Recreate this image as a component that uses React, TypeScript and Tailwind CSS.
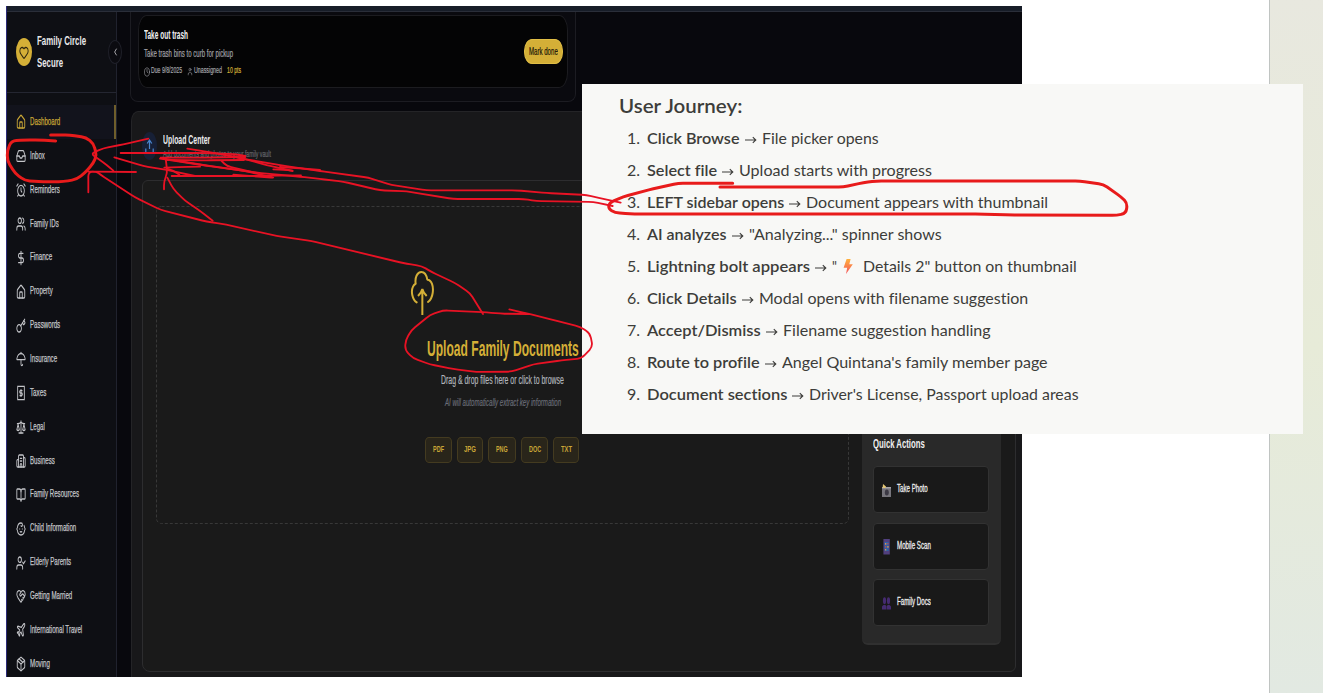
import { useLayoutEffect, useRef, useState } from "react";
import type { ReactNode } from "react";
import {
  House, Inbox, AlarmClock, Users, DollarSign, Key, Umbrella, Scale, Building2,
  BookOpen, Baby, UserCheck, HeartHandshake, Plane, Package, Heart, ChevronLeft, Clock, User,
} from "lucide-react";

/* Text stretched or squeezed horizontally to a fixed width. */
function Fit({ w, className = "", children }: { w: number; className?: string; children: ReactNode }) {
  const ref = useRef<HTMLSpanElement>(null);
  const [s, setS] = useState(1);
  useLayoutEffect(() => {
    if (ref.current) setS(w / ref.current.offsetWidth);
  }, [w]);
  return (
    <span className={`block shrink-0 whitespace-nowrap ${className}`} style={{ width: w }}>
      <span ref={ref} className="inline-block origin-left" style={{ transform: `scaleX(${s})` }}>
        {children}
      </span>
    </span>
  );
}

function TaxIcon(props: any) {
  return (
    <svg viewBox="0 0 24 24" fill="none" stroke="currentColor" strokeWidth="2.4" {...props}>
      <path d="M4 2h16v20H4z" />
      <path d="M15.5 8.5h-5a1.8 1.8 0 0 0 0 3.6h3a1.8 1.8 0 0 1 0 3.6h-5M12 6v12" />
    </svg>
  );
}

const nav: [string, any, number][] = [
  ["Dashboard", House, 30],
  ["Inbox", Inbox, 15],
  ["Reminders", AlarmClock, 30],
  ["Family IDs", Users, 29],
  ["Finance", DollarSign, 22],
  ["Property", House, 23],
  ["Passwords", Key, 30],
  ["Insurance", Umbrella, 27],
  ["Taxes", TaxIcon, 16],
  ["Legal", Scale, 15],
  ["Business", Building2, 25],
  ["Family Resources", BookOpen, 49],
  ["Child Information", Baby, 46],
  ["Elderly Parents", UserCheck, 41],
  ["Getting Married", HeartHandshake, 42],
  ["International Travel", Plane, 52],
  ["Moving", Package, 20],
];

function Sidebar() {
  return (
    <aside className="relative w-[110px] shrink-0 border-r border-[#20222e] bg-[#0e0f14]">
      <div className="flex h-[81px] items-center gap-[5px] border-b border-[#242631] pl-[9px]">
        <div className="flex h-7 w-4 shrink-0 items-center justify-center rounded-[50%] bg-[#d4af37] text-[#2b2410]">
          <Heart preserveAspectRatio="none" strokeWidth={2.2} className="h-[15px] w-[10px]" />
        </div>
        <div className="text-[13.5px] leading-[22px] font-bold text-[#e8e8ea]">
          <Fit w={49}>Family Circle</Fit>
          <Fit w={26}>Secure</Fit>
        </div>
      </div>
      <div className="absolute top-[28px] left-[101px] flex h-6 w-[14px] items-center justify-center rounded-[50%] border border-[#1f2029] bg-[#0b0b10] text-[#c9c9cc]">
        <ChevronLeft preserveAspectRatio="none" className="h-3 w-[7px]" />
      </div>
      <nav className="mt-3">
        {nav.map(([label, Icon, w], i) => (
          <div
            key={label}
            className={
              i === 0
                ? "flex h-[33.87px] items-center gap-[4px] border-r-2 border-[#6f5e2b] bg-[#12131c] pl-[9px] text-[#c9a636]"
                : "flex h-[33.87px] items-center gap-[4px] pl-[9px] text-[#c4c5c9]"
            }
          >
            <Icon preserveAspectRatio="none" strokeWidth={2.1} className="mt-px h-4 w-[10px] shrink-0" />
            <Fit w={w} className="pb-[2px] text-[10.5px] leading-4 [-webkit-text-stroke:0.25px_currentColor]">{label}</Fit>
          </div>
        ))}
      </nav>
    </aside>
  );
}

function TaskCard() {
  return (
    <section className="h-[90px] w-[446px] rounded-b-[8px] border border-t-0 border-[#1c1c22] bg-[#0a0a0f] pt-[3px] pl-[7px]">
      <div className="flex h-[73px] w-[430px] items-center justify-between rounded-[9px/15px] border border-[#1c1c20] bg-[#040405] pr-[4px] pl-[5px]">
        <div className="pt-px">
          <Fit w={44} className="text-[12px] leading-[18px] font-bold text-[#f2f2f2]">Take out trash</Fit>
          <Fit w={89} className="text-[10.5px] leading-[18px] text-[#a3a3a8] [-webkit-text-stroke:0.2px_currentColor]">Take trash bins to curb for pickup</Fit>
          <div className="flex h-4 items-center text-[8.5px] leading-4 text-[#a3a3a8] [-webkit-text-stroke:0.2px_currentColor]">
            <Clock preserveAspectRatio="none" strokeWidth={1.8} className="mt-1 h-[10px] w-[6px]" />
            <Fit w={31} className="ml-px">Due 9/8/2025</Fit>
            <User preserveAspectRatio="none" strokeWidth={1.8} className="mt-[3px] ml-[5px] h-[9px] w-[6px]" />
            <Fit w={28} className="ml-px">Unassigned</Fit>
            <Fit w={14} className="ml-[5px] text-[#d4af37]">10 pts</Fit>
          </div>
        </div>
        <button className="flex h-[25px] w-[39px] items-center justify-center rounded-[8px/12px] border border-[#e0bd45] bg-[#d4af37]">
          <Fit w={29} className="pb-px text-[10.5px] leading-4 text-[#151208] [-webkit-text-stroke:0.2px_currentColor]">Mark done</Fit>
        </button>
      </div>
    </section>
  );
}

function UploadCloud() {
  return (
    <svg viewBox="88 58 74 138" className="-ml-4 h-[46px] w-[24.7px]" fill="none" stroke="#d4af37" strokeWidth="6">
      <path strokeLinecap="round" strokeLinejoin="round" d="M108 155C95 147 90 122 97 108C99 104 101 102 105 99C102 80 110 64 122 64C132 64 138 76 140 87C153 87 159 107 156 127C154 141 149 149 142 154" />
      <path d="M125 193V117M112 136C118 130 123 124 125 115C127 124 132 130 138 136" />
    </svg>
  );
}

const chips: [string, string, number][] = [
  ["PDF", "w-[27px]", 11],
  ["JPG", "w-[26px]", 12],
  ["PNG", "w-[28px]", 12],
  ["DOC", "w-[27px]", 12],
  ["TXT", "w-[26px]", 11],
];

function DropZone() {
  return (
    <div className="relative mt-[25px] ml-[13px] h-[318px] w-[693px] shrink-0">
      <svg className="absolute inset-0" width="693" height="318" fill="none">
        <rect x="0.5" y="0.5" width="692" height="317" rx="5" stroke="#383838" strokeDasharray="3 2" />
      </svg>
      <div className="mx-auto flex w-[154px] flex-col items-center pt-[64px]">
        <div className="w-full"><UploadCloud /></div>
        <Fit w={152} className="mt-[19px] text-[22.5px] leading-7 font-bold text-[#d4af37]">Upload Family Documents</Fit>
        <Fit w={123} className="mt-[8px] text-[12px] leading-[18px] text-[#b0b4ba] [-webkit-text-stroke:0.2px_currentColor]">Drag &amp; drop files here or click to browse</Fit>
        <Fit w={116} className="mt-1 text-[10.5px] leading-[18px] text-[#696c76] italic [-webkit-text-stroke:0.2px_currentColor]">AI will automatically extract key information</Fit>
        <div className="mt-[26px] -ml-px flex gap-[5px]">
          {chips.map(([name, width, w]) => (
            <div key={name} className={`flex h-[26px] items-center justify-center rounded-[4px/5px] border border-[#443b20] bg-[#29251a] ${width}`}>
              <Fit w={w} className="pb-[2px] text-[9.5px] leading-4 font-bold text-[#c9a636]">{name}</Fit>
            </div>
          ))}
        </div>
      </div>
    </div>
  );
}

function CameraIcon() {
  return (
    <svg viewBox="0 0 9 13" className="h-[13px] w-[9px]">
      <path fill="#77757c" d="M0 3h9v10H0z" />
      <path fill="#a5a3a8" d="M0 3h9v1.5H0z" />
      <ellipse cx="4.8" cy="8.5" rx="2" ry="3" fill="#3c3944" />
      <path fill="#e5c674" d="M1 0l3 2.6L3.5 4H.6z" />
    </svg>
  );
}

function PhoneIcon() {
  return (
    <svg viewBox="0 0 9 16" className="h-4 w-[9px]">
      <path fill="#51407f" d="M1.4 0h6.4v15.5H1.4z" />
      <path fill="#2f62a8" d="M2.5 3h4.2v9H2.5z" />
      <path fill="#d9924c" d="M3 4h1.3v1.7H3zM5.3 7h1.3v1.8H5.3zM3 10h1.3v1.5H3z" />
      <path fill="#b04b5c" d="M5.2 4h1.3v1.6H5.2zM3 7h1.3v1.7H3z" />
    </svg>
  );
}

function PeopleIcon() {
  return (
    <svg viewBox="0 0 9 13" className="h-[13px] w-[9px]" fill="#452b70">
      <ellipse cx="2.5" cy="3.7" rx="1.6" ry="3.4" />
      <ellipse cx="6.5" cy="3.7" rx="1.6" ry="3.4" />
      <path d="M0 12.5V9.5q2.2-3 4.3-.5v3.5zM4.8 12.5V9q2.2-2.5 4.2.5v3z" />
    </svg>
  );
}

const actions: [string, () => ReactNode, number][] = [
  ["Take Photo", CameraIcon, 31],
  ["Mobile Scan", PhoneIcon, 34],
  ["Family Docs", PeopleIcon, 34],
];

function QuickActions() {
  return (
    <div className="mt-[245px] ml-[13px] h-[219px] w-[139px] shrink-0 rounded-b-[6px] border-b-2 border-[#303030] bg-[#292929] pt-[9px] pl-[11px]">
      <Fit w={52} className="text-[12.5px] leading-[18px] font-bold text-[#f0f0f0]">Quick Actions</Fit>
      <div className="mt-[13px] flex flex-col gap-[9.5px]">
        {actions.map(([label, Icon, w]) => (
          <div key={label} className="flex h-[47px] w-[116px] items-center gap-[6px] rounded-[4px] border border-[#323232] bg-[#191919] pl-[8px]">
            <span className="mt-px"><Icon /></span>
            <Fit w={w} className="pb-[3px] text-[10.5px] leading-4 text-[#ededed] [-webkit-text-stroke:0.3px_currentColor]">{label}</Fit>
          </div>
        ))}
      </div>
    </div>
  );
}

function UploadCenter() {
  return (
    <section className="mt-[9px] ml-px flex h-[567px] w-[891px] flex-col rounded-tl-[7px_10px] border-t border-l border-[#242427] bg-[#18181a] pl-[10px]">
      <div className="mt-[20px] flex items-center">
        <div className="flex h-7 w-[15px] shrink-0 items-center justify-center rounded-[50%] bg-[#172036]">
          <svg viewBox="0 0 9 15" className="h-[15px] w-[9px]" fill="none" stroke="#4a86cf" strokeWidth="1.2">
            <path d="M4.5 10V1M2.2 4.5L4.5 1l2.3 3.5M.8 9.5v4h7.4v-4" />
          </svg>
        </div>
        <div className="ml-[6px]">
          <Fit w={47} className="text-[12.5px] leading-4 font-bold text-[#ececee]">Upload Center</Fit>
          <Fit w={108} className="text-[8.5px] leading-3 text-[#66676d] [-webkit-text-stroke:0.2px_currentColor]">Add documents and photos to your family vault</Fit>
        </div>
      </div>
      <div className="mt-[20px] flex h-[492px] w-[874px] shrink-0 rounded-[6px_8px] border border-[#2d2d2f] bg-[#1a1a1a]">
        <DropZone />
        <QuickActions />
      </div>
    </section>
  );
}

function Bolt() {
  return (
    <svg viewBox="0 0 10 15" className="mx-[6px] h-[15px] w-[10px] shrink-0">
      <defs>
        <linearGradient id="bolt" x1="0" y1="0" x2="0" y2="1">
          <stop offset="0" stopColor="#ffb13b" />
          <stop offset="1" stopColor="#f4525c" />
        </linearGradient>
      </defs>
      <path fill="url(#bolt)" d="M3.6 0h4L6.3 5.2H9.8L3 15l1.2-6.2H.6z" />
    </svg>
  );
}

type Step = [string, number, string, number];
const steps: Step[] = [
  ["Click Browse", 93, "File picker opens", 117],
  ["Select file", 70, "Upload starts with progress", 193],
  ["LEFT sidebar opens", 137, "Document appears with thumbnail", 242],
  ["AI analyzes", 80, "\"Analyzing...\" spinner shows", 193],
  ["Lightning bolt appears", 163, "", 0],
  ["Click Details", 90, "Modal opens with filename suggestion", 269],
  ["Accept/Dismiss", 114, "Filename suggestion handling", 208],
  ["Route to profile", 113, "Angel Quintana's family member page", 266],
  ["Document sections", 140, "Driver's License, Passport upload areas", 270],
];

function Journey() {
  return (
    <article className="absolute top-[84px] left-[582px] h-[350px] w-[721px] bg-[#f8f8f6] pt-[8px] pl-[37px] font-['Lato','Open_Sans',sans-serif] text-[#3d3d3a] [font-variant-ligatures:none]">
      <Fit w={123} className="text-[19.5px] leading-[28px] font-semibold">User Journey:</Fit>
      <ol className="mt-[2px]">
        {steps.map(([bold, bw, rest, rw], i) => (
          <li key={bold} className="flex h-8 items-center text-[16px] leading-8">
            <span className="w-[28px] pl-[8px]">{i + 1}.</span>
            <Fit w={bw} className="font-semibold">{bold}</Fit>
            <svg viewBox="0 0 12 10" className="mt-[3px] mr-[5px] ml-[5px] h-[10px] w-3 shrink-0" fill="none" stroke="#3d3d3a" strokeWidth="1.1">
              <path d="M0 5h10.6M7.8 2.2L10.8 5 7.8 7.8" />
            </svg>
            {rest ? (
              <Fit w={rw}>{rest}</Fit>
            ) : (
              <>
                <Fit w={5}>"</Fit>
                <Bolt />
                <Fit w={214} className="ml-[4px]">Details 2" button on thumbnail</Fit>
              </>
            )}
          </li>
        ))}
      </ol>
    </article>
  );
}

/* Freehand strokes: points in thirds of a pixel, relative to an origin. */
type Stroke = { o: [number, number]; thick?: boolean; p: number[] };
const strokes: Stroke[] = [
  { o: [0, 0], thick: true, p: [167,423,120,420,75,420,35,422,22,450,22,482,45,520,75,542,130,545,190,545,230,538,255,518,280,490,290,465,280,430,258,412,210,405,152,405] },
  { o: [580, 80], thick: true, p: [458,310,295,310,220,326,130,350,88,368,85,386,105,398,150,402,1200,402,1290,405,1610,406,1638,400,1642,370,1625,352,1570,313,1500,303,890,303,850,308,790,321,420,321] },
  { o: [0, 0], p: [445,416,370,433,310,445,272,461,310,487,340,512] },
  { o: [0, 0], p: [265,577,265,515,408,516] },
  { o: [100, 100], p: [-35,215,-10,215,0,223,105,292,183,330,320,365,365,371,530,408,635,423,900,487,920,491,965,498,995,516,1065,549,1110,579,1149,642] },
  { o: [100, 100], p: [62,159,300,159,400,162,436,168] },
  { o: [100, 100], p: [43,172,130,198,200,210,285,228] },
  { o: [100, 100], p: [262,146,350,160,430,176,500,195,578,213] },
  { o: [100, 100], p: [182,173,300,173,436,171] },
  { o: [100, 100], p: [200,180,320,181,432,180] },
  { o: [100, 100], p: [180,176,320,197,430,212,527,234,400,224] },
  { o: [100, 100], p: [365,183,380,198,470,219] },
  { o: [100, 100], p: [192,268,192,245,202,218,197,175] },
  { o: [100, 100], p: [202,233,220,267,255,302,300,333,338,362] },
  { o: [100, 100], p: [193,203,250,201,300,200] },
  { o: [100, 100], p: [200,206,220,212,238,224] },
  { o: [100, 100], p: [215,228,450,228,603,226] },
  { o: [100, 100], p: [540,201,600,205,660,210] },
  { o: [100, 100], p: [520,208,550,209,577,212] },
  { o: [320, 0], p: [-260,468,-240,475,-110,497,0,513,145,533,215,555,320,571,590,571,680,579,800,585,850,597,902,608] },
  { o: [320, 0], p: [-470,476,-350,495,-190,518,-60,530,0,537,70,545,180,571,260,574,400,597,610,597,650,603,820,606,878,618] },
  { o: [380, 250], p: [445,192,360,191,320,187,190,181,150,195,95,240,77,270,75,300,100,325,150,343,220,357,290,366,395,365,460,343,545,331,605,325,638,290,630,250,600,230,520,210,440,190,388,178] },
];

function toPath(p: number[]) {
  let d = `M${p[0]} ${p[1]}`;
  for (let i = 2; i < p.length; i += 2) {
    const [x, y] = [p[i], p[i + 1]];
    const [px, py] = [p[i - 2], p[i - 1]];
    const dx = x - px;
    const dy = y - py;
    const r = Math.min(0.5, 14 / Math.hypot(dx, dy));
    if (i > 2) d += `Q${px} ${py} ${px + dx * r} ${py + dy * r}`;
    d += i + 2 < p.length ? `L${x - dx * r} ${y - dy * r}` : `L${x} ${y}`;
  }
  return d;
}

function Annotations() {
  return (
    <svg className="pointer-events-none absolute inset-0" width="1323" height="693" fill="none" strokeLinecap="round" strokeLinejoin="round">
      {strokes.map(({ o, thick, p }, i) => (
        <path
          key={i}
          d={toPath(p)}
          transform={`translate(${o[0]} ${o[1]}) scale(0.33333)`}
          stroke={thick ? "#e81b1b" : "#e81224"}
          strokeWidth={thick ? 9 : 5.5}
        />
      ))}
    </svg>
  );
}

export default function App() {
  return (
    <div className="relative flex h-[693px] w-[1323px] justify-between overflow-hidden bg-white font-['Liberation_Sans',Arial,sans-serif]">
      <div className="mt-[6px] ml-[6px] flex h-[671px] w-[1016px] flex-col overflow-hidden border-l border-[#2c2b78] bg-[#08080d]">
        <div className="h-[6px] shrink-0 border-b border-[#2a2e39] bg-[#171d28]" />
        <div className="flex min-h-0 flex-1">
          <Sidebar />
          <main className="min-w-0 flex-1 pl-[13px]">
            <TaskCard />
            <UploadCenter />
          </main>
        </div>
      </div>
      <div className="w-[54px] border-l border-[#c0c4c2] bg-linear-to-b from-[#e8e8df] via-[#e7ebd8] to-[#e2e9e2]" />
      <Journey />
      <Annotations />
    </div>
  );
}
